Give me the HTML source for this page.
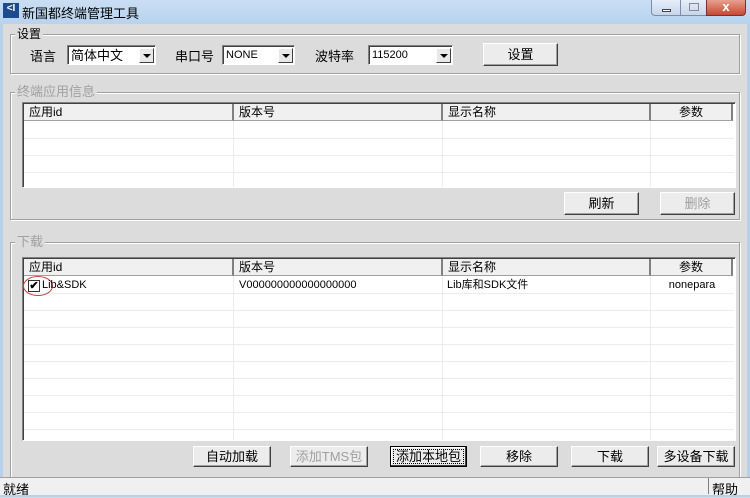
<!DOCTYPE html>
<html><head><meta charset="utf-8"><style>
*{margin:0;padding:0;box-sizing:border-box}
body{width:750px;height:497px;overflow:hidden;background:#dcdcdc;font-family:"Liberation Sans","Noto Sans CJK SC",sans-serif;font-size:12px;color:#000;position:relative}
.a{position:absolute}
.title{left:0;top:0;width:750px;height:24px;background:linear-gradient(#c9def3,#b8d3ee);}
.grp{border:1px solid #a0a0a0;box-shadow:inset 1px 1px 0 #fff,1px 1px 0 #fff}
.leg{background:#dcdcdc;padding:0 2px;line-height:14px}
.dis{color:#a0a0a0}
.combo{background:#fff;border:1px solid;border-color:#808080 #fff #fff #808080;box-shadow:inset 1px 1px 0 #404040;height:20px;line-height:19px;padding-left:3px}
.arr{position:absolute;right:1px;top:2px;width:15px;height:15px;background:#e8e8e8;border:1px solid;border-color:#fff #404040 #404040 #fff}
.arr:after{content:"";position:absolute;left:3px;top:5px;border:4px solid transparent;border-top:4px solid #000;border-bottom:0}
.btn{background:#ececec;border:1px solid;border-color:#fff #404040 #404040 #fff;box-shadow:inset -1px -1px 0 #a0a0a0;text-align:center;line-height:19px;font-size:13px}
.list{background:#fff;border:1px solid;border-color:#808080 #fff #fff #808080;box-shadow:inset 1px 1px 0 #404040;overflow:hidden}
.hd{position:absolute;top:1px;height:17px;background:#f0f0f0;border-right:2px solid #808080;border-bottom:1px solid #a0a0a0;line-height:17px;padding-left:5px;font-size:12px}
.rl{position:absolute;left:1px;right:1px;height:1px;background:#ececec}
.cl{position:absolute;top:18px;bottom:0;width:1px;background:#ececec}
.cell{position:absolute;top:19px;height:17px;line-height:17px}
</style></head><body>
<div class="a title"></div>
<div class="a" style="left:3px;top:3px;width:16px;height:15px;background:#1d4c8e;color:#fff;font-size:10px;font-weight:bold;line-height:12px;text-align:center">&lt;I</div>
<div class="a" style="left:22px;top:3px;font-size:13px">新国都终端管理工具</div>
<div class="a" style="left:651px;top:0;width:30px;height:16px;border:1px solid #7a8ea8;border-top:0;border-radius:0 0 0 4px;background:linear-gradient(#e6eef8,#c6d6ea)"><div class="a" style="left:10px;top:9px;width:9px;height:3px;background:#fff;border:1px solid #445"></div></div>
<div class="a" style="left:680px;top:0;width:27px;height:16px;border:1px solid #7a8ea8;border-top:0;background:linear-gradient(#e6eef8,#c6d6ea)"><div class="a" style="left:8px;top:3px;width:10px;height:8px;border:1px solid #889"></div></div>
<div class="a" style="left:706px;top:0;width:40px;height:16px;border:1px solid #7a3030;border-top:0;border-radius:0 0 4px 0;background:linear-gradient(#e8a090,#c84830);color:#fff;font-weight:bold;text-align:center;line-height:14px;font-size:13px">x</div>
<div class="a" style="left:0;top:24px;width:3px;height:473px;background:#b8d0ea"></div>
<div class="a" style="left:747px;top:24px;width:3px;height:473px;background:#b8d0ea"></div>

<div class="a grp" style="left:10px;top:34px;width:730px;height:40px"></div>
<div class="a leg" style="left:15px;top:27px">设置</div>
<div class="a" style="left:30px;top:46px;font-size:13px">语言</div>
<div class="a combo" style="left:67px;top:45px;width:89px;font-size:13px">简体中文<div class="arr"></div></div>
<div class="a" style="left:175px;top:46px;font-size:13px">串口号</div>
<div class="a combo" style="left:222px;top:45px;width:73px;font-size:11px">NONE<div class="arr"></div></div>
<div class="a" style="left:315px;top:46px;font-size:13px">波特率</div>
<div class="a combo" style="left:368px;top:45px;width:85px;font-size:11px">115200<div class="arr"></div></div>
<div class="a btn" style="left:483px;top:43px;width:75px;height:23px;line-height:21px">设置</div>

<div class="a grp" style="left:10px;top:92px;width:730px;height:128px"></div>
<div class="a leg dis" style="left:15px;top:85px;font-size:13px">终端应用信息</div>
<div class="a list" style="left:22px;top:102px;width:714px;height:86px">
<div class="hd" style="left:1px;width:210px">应用id</div>
<div class="hd" style="left:211px;width:209px">版本号</div>
<div class="hd" style="left:420px;width:208px">显示名称</div>
<div class="hd" style="left:628px;width:82px;text-align:center;padding:0">参数</div>
<div class="rl" style="top:35px"></div><div class="rl" style="top:52px"></div><div class="rl" style="top:69px"></div>
<div class="cl" style="left:210px"></div><div class="cl" style="left:419px"></div><div class="cl" style="left:627px"></div>
</div>
<div class="a btn" style="left:564px;top:192px;width:75px;height:23px;line-height:21px">刷新</div>
<div class="a btn dis" style="left:660px;top:192px;width:75px;height:23px;line-height:21px">删除</div>

<div class="a grp" style="left:10px;top:242px;width:730px;height:236px"></div>
<div class="a leg dis" style="left:15px;top:235px;font-size:13px">下载</div>
<div class="a list" style="left:22px;top:257px;width:714px;height:184px">
<div class="hd" style="left:1px;width:210px">应用id</div>
<div class="hd" style="left:211px;width:209px">版本号</div>
<div class="hd" style="left:420px;width:208px">显示名称</div>
<div class="hd" style="left:628px;width:82px;text-align:center;padding:0">参数</div>
<div class="rl" style="top:35px"></div><div class="rl" style="top:52px"></div><div class="rl" style="top:69px"></div><div class="rl" style="top:86px"></div><div class="rl" style="top:103px"></div><div class="rl" style="top:120px"></div><div class="rl" style="top:137px"></div><div class="rl" style="top:154px"></div><div class="rl" style="top:171px"></div>
<div class="cl" style="left:210px"></div><div class="cl" style="left:419px"></div><div class="cl" style="left:627px"></div>
<div class="a" style="left:5px;top:22px;width:12px;height:12px;border:1px solid #333;background:#fff;font-size:11px;line-height:10px;text-align:center;font-weight:bold">✔</div>
<div class="a" style="left:0px;top:18px;width:30px;height:20px;border:1px solid #d04040;border-radius:50%"></div>
<div class="cell" style="left:19px;font-size:11px">Lib&amp;SDK</div>
<div class="cell" style="left:216px;font-size:11px">V000000000000000000</div>
<div class="cell" style="left:424px;font-size:11px">Lib库和SDK文件</div>
<div class="cell" style="left:628px;width:82px;font-size:11px;text-align:center">nonepara</div>
</div>
<div class="a btn" style="left:193px;top:446px;width:78px;height:21px">自动加载</div>
<div class="a btn dis" style="left:290px;top:446px;width:78px;height:21px">添加TMS包</div>
<div class="a btn" style="left:390px;top:446px;width:77px;height:21px;border:1px solid #000;box-shadow:inset -1px -1px 0 #404040,inset 1px 1px 0 #fff"><div style="margin:2px;border:1px dotted #000;line-height:13px">添加本地包</div></div>
<div class="a btn" style="left:480px;top:446px;width:78px;height:21px">移除</div>
<div class="a btn" style="left:571px;top:446px;width:78px;height:21px">下载</div>
<div class="a btn" style="left:657px;top:446px;width:78px;height:21px">多设备下载</div>

<div class="a" style="left:0;top:477px;width:750px;height:18px;background:#f0f0f0;border-top:1px solid #a0a0a0"></div>
<div class="a" style="left:3px;top:479px;font-size:13px">就绪</div>
<div class="a" style="left:708px;top:478px;width:1px;height:16px;background:#808080"></div>
<div class="a" style="left:712px;top:479px;font-size:13px">帮助</div>
<div class="a" style="left:0;top:495px;width:750px;height:2px;background:#b8d0ea"></div>
</body></html>
